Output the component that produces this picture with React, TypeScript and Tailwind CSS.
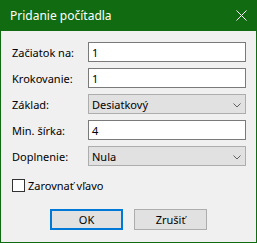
const font = { fontFamily: '"Noto Sans", "Liberation Sans", sans-serif' };

const Chevron = () => (
  <svg width="8" height="5" viewBox="0 0 8 5" className="absolute right-[4px] top-[8px]">
    <path d="M0.5 0.5 L4 4 L7.5 0.5" fill="none" stroke="#606060" strokeWidth="1" />
  </svg>
);

const TextRow = ({ label, value }: { label: string; value: string }) => (
  <div className="flex items-center h-[20px]">
    <div className="w-[76px] shrink-0">{label}</div>
    <div className="w-[158px] h-[20px] bg-white border border-[#7a7a7a] flex items-center pl-[3px]">
      {value}
    </div>
  </div>
);

const SelectRow = ({ label, value }: { label: string; value: string }) => (
  <div className="flex items-center h-[20px]">
    <div className="w-[76px] shrink-0">{label}</div>
    <div className="relative w-[158px] h-[20px] bg-[#e1e1e1] border border-[#adadad] flex items-center pl-[3px]">
      {value}
      <Chevron />
    </div>
  </div>
);

export default function App() {
  return (
    <div
      className="w-[257px] h-[243px] border border-[#116b11] bg-[#f0f0f0] flex flex-col text-[11px] text-black leading-none"
      style={font}
    >
      <div className="h-[30px] bg-[#116b11] flex items-center justify-between pl-[9px] pr-[9px] text-white text-[12px]">
        <span className="pb-[1px]">Pridanie počítadla</span>
        <svg width="11" height="11" viewBox="0 0 11 11" className="mt-[-1px]">
          <path d="M0.5 0.5 L10.5 10.5 M10.5 0.5 L0.5 10.5" stroke="#fff" strokeWidth="1" />
        </svg>
      </div>
      <div className="flex flex-col pt-[11px] pl-[11px]">
        <div className="flex flex-col gap-[6px]">
          <TextRow label="Začiatok na:" value="1" />
          <TextRow label="Krokovanie:" value="1" />
          <SelectRow label="Základ:" value="Desiatkový" />
          <TextRow label="Min. šírka:" value="4" />
          <SelectRow label="Doplnenie:" value="Nula" />
        </div>
        <label className="flex items-center gap-[3px] mt-[13px] h-[13px]">
          <span className="w-[13px] h-[13px] bg-white border border-[#333333]" />
          <span>Zarovnať vľavo</span>
        </label>
      </div>
      <div className="flex justify-center gap-[11px] mt-[17px]">
        <button className="w-[73px] h-[21px] bg-[#e1e1e1] border-2 border-[#0078d7] flex items-center justify-center">
          OK
        </button>
        <button className="w-[73px] h-[21px] bg-[#e1e1e1] border border-[#adadad] flex items-center justify-center">
          Zrušiť
        </button>
      </div>
    </div>
  );
}
